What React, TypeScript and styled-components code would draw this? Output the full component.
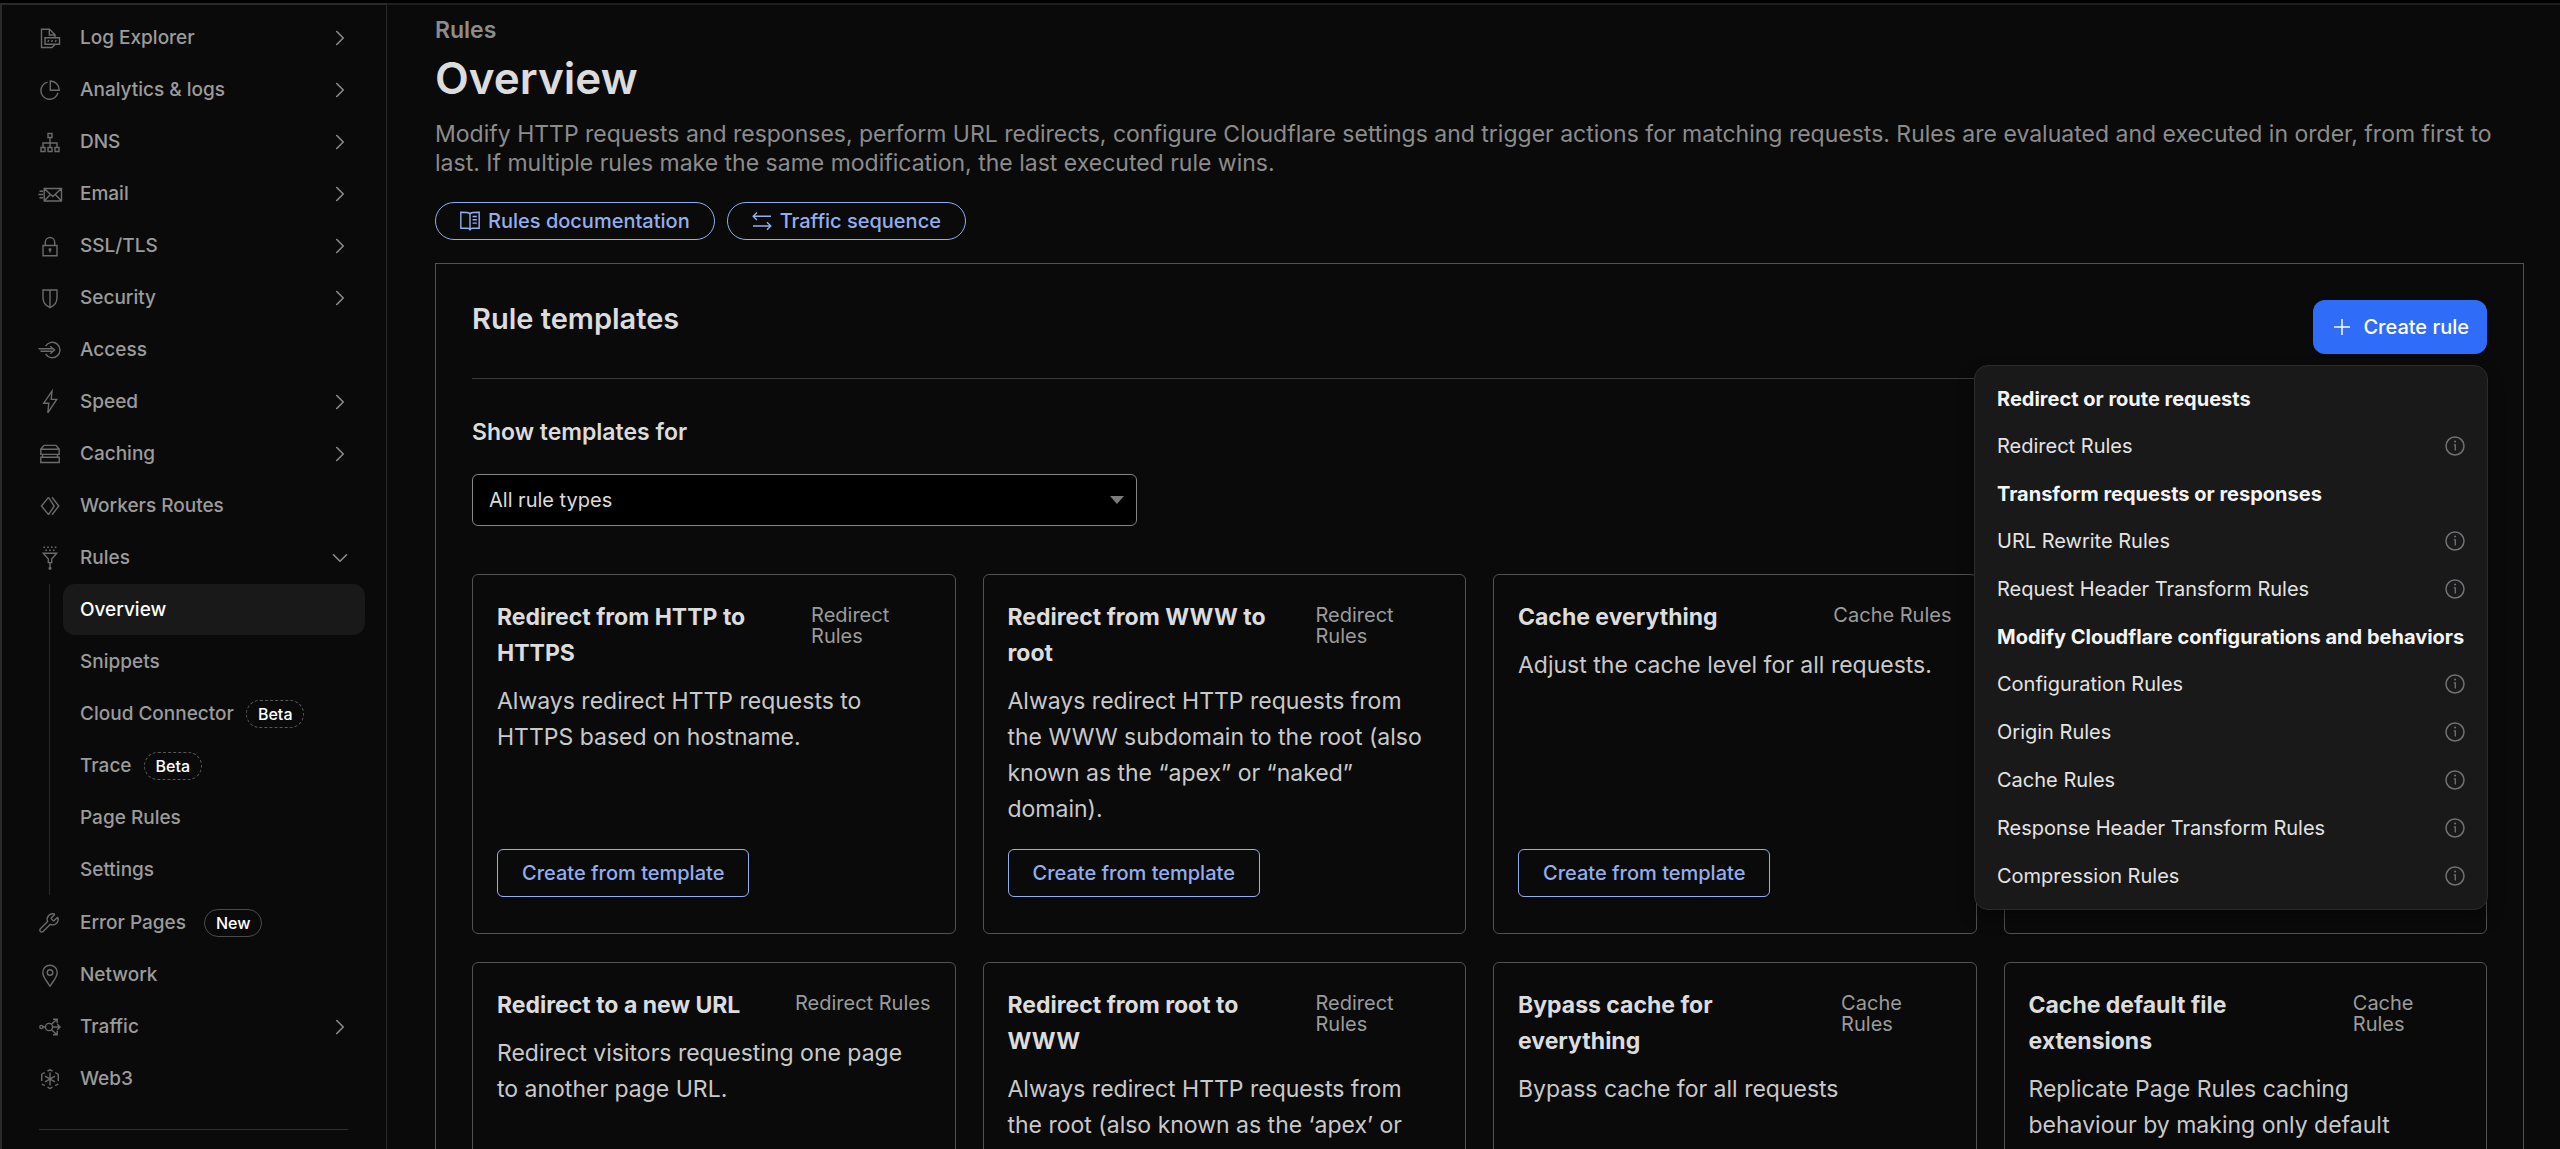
import React, { useState } from "react";
import styled, { createGlobalStyle, css } from "styled-components";
import { ChevronDown, ChevronRight, Wrench } from "lucide-react";

const color = {
  page: "#0a0a0a",
  line: "#2a2a2a",
  outline: "#525252",
  muted: "#9b9b9b",
  soft: "#8c8c8c",
  body: "#c9c9c9",
  heading: "#dcdcdc",
  link: "#93aeee",
  primary: "#2f6cf8",
  menu: "#191919",
};

const GlobalStyle = createGlobalStyle`
  *, *::before, *::after { box-sizing: border-box; }
  body {
    margin: 0;
    background: #000;
    color: ${color.body};
    font-family: Inter, "Liberation Sans", sans-serif;
  }
  h1, h2, h3, p, ul { margin: 0; padding: 0; }
  ul { list-style: none; }
  button, select { font-family: inherit; }
  a { text-decoration: none; color: inherit; }
`;

const Shell = styled.div`
  display: flex;
  height: 100vh;
  overflow: hidden;
  border-top: 3px solid #000;
`;

/* Sidebar */

const Sidebar = styled.nav`
  flex: 0 0 387px;
  border: 2px solid ${color.line};
  border-bottom: 0;
  border-right-width: 1px;
  background: ${color.page};
  padding: 7px 21px 0 0;
`;

const NavList = styled.ul`
  display: flex;
  flex-direction: column;
  gap: 1px;
`;

const SubList = styled(NavList)`
  margin: 1px 0 1px 47px;
  padding-left: 13px;
  border-left: 1px solid ${color.line};
`;

const NavLink = styled.a<{ $nested?: boolean; $active?: boolean }>`
  display: flex;
  align-items: center;
  height: 51px;
  padding: 0 12px 0 36px;
  border-radius: 12px;
  color: ${color.muted};
  font-size: 19px;
  font-weight: 500;
  ${(p) => p.$nested && css`padding-left: 17px;`}
  ${(p) => p.$active && css`background: ${color.menu}; color: #fff;`}
`;

const NavIcon = styled.span`
  display: flex;
  width: 24px;
  margin-right: 18px;
  color: #6b6b6b;
  svg { overflow: visible; }
`;

const NavArrow = styled.span`
  display: flex;
  margin-left: auto;
  color: #8a8a8a;
`;

const Badge = styled.span<{ $dashed?: boolean }>`
  display: inline-flex;
  align-items: center;
  height: 28px;
  margin-left: ${(p) => (p.$dashed ? 12 : 18)}px;
  padding: 0 11px;
  border: ${(p) => (p.$dashed ? "1px dashed #585858" : "1px solid #4c4c4c")};
  border-radius: 14px;
  color: #fff;
  font-size: 16px;
`;

const NavDivider = styled.hr`
  margin: 25px 17px 0 37px;
  border: 0;
  border-top: 1px solid #303030;
`;

/* Main column */

const Main = styled.main`
  flex: 1;
  min-width: 0;
  padding: 11px 36px 0 48px;
  border-top: 2px solid #1e1e1e;
  background: ${color.page};
`;

const Crumb = styled.p`
  color: ${color.soft};
  font-size: 23px;
  font-weight: 600;
  line-height: 28px;
`;

const PageTitle = styled.h1`
  margin-top: 7px;
  color: ${color.heading};
  font-size: 44px;
  font-weight: 600;
  line-height: 54px;
`;

const Intro = styled.p`
  margin-top: 15px;
  color: ${color.soft};
  font-size: 23px;
  line-height: 29px;
`;

const LinkRow = styled.div`
  display: flex;
  gap: 12px;
  margin-top: 24px;
`;

const PillLink = styled.a`
  display: flex;
  align-items: center;
  gap: 8px;
  height: 38px;
  padding: 0 24px;
  border: 1px solid ${color.link};
  border-radius: 19px;
  color: ${color.link};
  font-size: 20px;
  font-weight: 500;
`;

const Panel = styled.section`
  margin-top: 23px;
  padding: 36px;
  border: 1px solid ${color.outline};
`;

const PanelHeader = styled.header`
  display: flex;
  justify-content: space-between;
  align-items: flex-start;
  padding-bottom: 24px;
  border-bottom: 1px solid #3a3a3a;
`;

const PanelTitle = styled.h2`
  color: ${color.heading};
  font-size: 29px;
  font-weight: 600;
  line-height: 38px;
`;

const CreateWrap = styled.div`
  position: relative;
`;

const CreateButton = styled.button`
  display: flex;
  align-items: center;
  gap: 12px;
  height: 54px;
  padding: 0 18px 0 20px;
  border: 0;
  border-radius: 12px;
  background: ${color.primary};
  color: #fff;
  font-size: 20px;
  font-weight: 500;
`;

const Menu = styled.ul`
  position: absolute;
  z-index: 2;
  top: calc(100% + 11px);
  right: -1px;
  min-width: 514px;
  padding: 9px 0;
  border: 1px solid #2c2c2c;
  border-radius: 14px;
  background: ${color.menu};
  box-shadow: 0 8px 16px rgba(0, 0, 0, 0.4);
  white-space: nowrap;
`;

const MenuHeading = styled.li`
  display: flex;
  align-items: center;
  height: 47px;
  padding: 0 22px;
  color: #f4f4f4;
  font-size: 20px;
  font-weight: 700;
`;

const MenuItem = styled.button`
  display: flex;
  align-items: center;
  justify-content: space-between;
  width: 100%;
  height: 48px;
  padding: 0 22px;
  border: 0;
  background: none;
  color: #e4e4e4;
  font-size: 20px;
  text-align: left;
  svg { color: #717176; }
`;

const Filter = styled.div`
  display: flex;
  flex-direction: column;
  gap: 24px;
  margin: 35px 0 48px;
`;

const FilterLabel = styled.label`
  color: ${color.heading};
  font-size: 23px;
  font-weight: 600;
  line-height: 36px;
`;

const SelectWrap = styled.div`
  display: flex;
  position: relative;
  width: 33%;
  svg {
    position: absolute;
    top: 22px;
    right: 13px;
    pointer-events: none;
  }
`;

const Select = styled.select`
  appearance: none;
  width: 100%;
  height: 52px;
  padding: 0 40px 0 16px;
  border: 1px solid #858585;
  border-radius: 6px;
  background: #000;
  color: ${color.heading};
  font-size: 20px;
`;

const CardGrid = styled.div`
  display: grid;
  grid-template-columns: repeat(4, 1fr);
  gap: 28px 27px;
`;

const Card = styled.article`
  display: flex;
  flex-direction: column;
  align-items: flex-start;
  min-height: 360px;
  padding: 24px 24px 36px;
  border: 1px solid ${color.outline};
  border-radius: 6px;
`;

const CardHead = styled.div`
  display: flex;
  justify-content: space-between;
  align-items: flex-start;
  gap: 22px;
  width: 100%;
`;

const CardTitle = styled.h3`
  color: ${color.heading};
  font-size: 23px;
  font-weight: 700;
  line-height: 36px;
`;

const CardTag = styled.span`
  padding-top: 6px;
  color: ${color.muted};
  font-size: 20px;
  line-height: 21px;
`;

const CardText = styled.p`
  margin: 12px 0 22px;
  padding-right: 8px;
  font-size: 23px;
  line-height: 36px;
`;

const TemplateButton = styled.button`
  height: 48px;
  margin-top: auto;
  padding: 0 24px;
  border: 1px solid ${color.link};
  border-radius: 6px;
  background: none;
  color: ${color.link};
  font-size: 20px;
  font-weight: 500;
`;

/* Icons */

const Glyph = ({ children }: { children: React.ReactNode }) => (
  <svg width="24" height="24" viewBox="0 0 24 24" fill="none" stroke="currentColor" strokeWidth="1.4" aria-hidden="true">
    {children}
  </svg>
);

const icons: Record<string, React.ReactNode> = {
  log: (
    <Glyph>
      <path d="M17 11.7V8.7L11.5 3.2H3.5V21.5H14L17 18.5M11.3 3.2V9H17" />
      <path d="M7 11.7H21.5V18.3H7Z" />
      <path d="M9.8 16l1-2M13.5 16l1-2M17.2 16l1-2" />
    </Glyph>
  ),
  analytics: (
    <Glyph>
      <path d="M9.6 4.1A8.7 8.7 0 1 0 20 14.8" />
      <path d="M12.3 3V12.3H21.3A9 9 0 0 0 12.3 3Z" />
    </Glyph>
  ),
  dns: (
    <Glyph>
      <path d="M10 3.5h4v4h-4zM3 17.5h4v4H3zM10 17.5h4v4h-4zM17 17.5h4v4h-4zM12 7.5v10M5 17.5V13h14v4.5" />
    </Glyph>
  ),
  email: (
    <Glyph>
      <path d="M6.2 6.5H23.5V19H6.2ZM6.2 6.5L14.8 14.5L23.5 6.5M6.2 19L12.3 12.4M23.5 19L17.3 12.4" />
      <path d="M1.5 9.3H5M.3 12.5H5M1.5 15.7H5" />
    </Glyph>
  ),
  lock: (
    <Glyph>
      <path d="M5 11.5H19V21.8H5ZM7.3 11.5V8.2a4.7 4.7 0 0 1 9.4 0V11.5" />
      <circle cx="12" cy="15.6" r=".8" fill="currentColor" />
      <path d="M12 16v2.5" />
    </Glyph>
  ),
  shield: (
    <Glyph>
      <path d="M5 4H19V11.5C19 16.5 16 20 12 21.7C8 20 5 16.5 5 11.5ZM12 4V21.5" />
    </Glyph>
  ),
  access: (
    <Glyph>
      <path d="M7.6 8.2A7.7 7.7 0 1 1 7.6 15.8" />
      <path d="M.5 10.7H15.5M2.5 13.2H15.5M12.2 8.3L16.6 12L12.2 15.7" />
    </Glyph>
  ),
  bolt: (
    <Glyph>
      <path d="M14 1.2L5.7 13.2H10.8L9.8 22.8L18.7 9.4H13.2Z" />
    </Glyph>
  ),
  cache: (
    <Glyph>
      <path d="M2.8 7.3L6 3.4H18L21.2 7.3M2.8 7.3H21.2V12.4H2.8ZM2.8 15.2H21.2V20.5H2.8ZM4.5 12.4V15.2M19.5 12.4V15.2" />
    </Glyph>
  ),
  workers: (
    <Glyph>
      <path d="M10.5 3.4L3.5 12L10.5 20.6M10.5 3.4L16.2 12L10.5 20.6M14 3.2L20.8 12L14 20.8" />
    </Glyph>
  ),
  funnel: (
    <Glyph>
      <path d="M5.4 1.3H19" strokeDasharray="1.6 2.2" />
      <path d="M7.4 4.3H17" strokeDasharray="1.6 2.2" />
      <path d="M5.3 7.2H18.7L13.7 13V16.6H10.3V13ZM12 16.6V21.5" />
      <circle cx="12" cy="22.3" r=".9" fill="currentColor" />
    </Glyph>
  ),
  wrench: <Wrench size={22} strokeWidth={1.5} aria-hidden="true" />,
  pin: (
    <Glyph>
      <path d="M12 23.2C9.2 18.8 4.8 14 4.8 9.4a7.2 7.2 0 0 1 14.4 0C19.2 14 14.8 18.8 12 23.2Z" />
      <circle cx="12" cy="9.5" r="2.8" />
    </Glyph>
  ),
  traffic: (
    <Glyph>
      <circle cx="3.4" cy="12" r="1.6" />
      <circle cx="11" cy="12" r="3.6" />
      <path d="M5 12H7.4M14.6 12H22M19.3 9.3L22 12L19.3 14.7M13.4 9.3L19 4.3M15 4.2H19.2V8.2M13.4 14.7L19 19.7M15 19.8H19.2V15.8" />
    </Glyph>
  ),
  web3: (
    <Glyph>
      <path d="M9.5 4L12 2.8L14.5 4M17.2 5.5L20.3 7.3V14M20.3 17L17.2 18.7M14.5 20.2L12 21.5L9.5 20.2M6.8 18.7L3.7 17M3.7 14V7.3L6.8 5.5" />
      <path d="M12 5.5V18.5M7 9.2L17 14.8M17 9.2L7 14.8" />
    </Glyph>
  ),
};

const BookIcon = () => (
  <svg width="20" height="20" viewBox="0 0 20 20" fill="none" stroke="currentColor" strokeWidth="1.4" aria-hidden="true">
    <path d="M10 2.6C8.6 1.5 6.5 1.3 .8 1.3V17.2H7.5C9 17.2 9.6 17.8 10 18.6C10.4 17.8 11 17.2 12.5 17.2H19.2V1.3C13.5 1.3 11.4 1.5 10 2.6ZM10 2.6V18.6" />
    <path d="M12.6 5.5H16.8M12.6 8.8H16.8M12.6 12.1H16.8" />
  </svg>
);

const SwapIcon = () => (
  <svg width="20" height="20" viewBox="0 0 20 20" fill="none" stroke="currentColor" strokeWidth="1.4" aria-hidden="true">
    <path d="M19 5.2H1.4M5 1.4L1.2 5.2L5 9M1 15H18.6M15 11.2L18.8 15L15 18.8" />
  </svg>
);

const PlusIcon = () => (
  <svg width="18" height="18" viewBox="0 0 18 18" fill="none" stroke="currentColor" strokeWidth="1.5" aria-hidden="true">
    <path d="M9 1V17M1 9H17" />
  </svg>
);

const InfoIcon = () => (
  <svg width="20" height="20" viewBox="0 0 20 20" fill="none" stroke="currentColor" strokeWidth="1.5" aria-hidden="true">
    <circle cx="10" cy="10" r="9" />
    <path d="M8.8 8.8H10.3V14.6" strokeWidth="1.3" />
    <circle cx="10.1" cy="5.6" r="1" fill="currentColor" stroke="none" />
  </svg>
);

/* Data */

type NavEntry = { label: string; icon: string; more?: boolean; badge?: string };

const navTop: NavEntry[] = [
  { label: "Log Explorer", icon: "log", more: true },
  { label: "Analytics & logs", icon: "analytics", more: true },
  { label: "DNS", icon: "dns", more: true },
  { label: "Email", icon: "email", more: true },
  { label: "SSL/TLS", icon: "lock", more: true },
  { label: "Security", icon: "shield", more: true },
  { label: "Access", icon: "access" },
  { label: "Speed", icon: "bolt", more: true },
  { label: "Caching", icon: "cache", more: true },
  { label: "Workers Routes", icon: "workers" },
];

const navRules = [
  { label: "Overview", active: true },
  { label: "Snippets" },
  { label: "Cloud Connector", badge: "Beta" },
  { label: "Trace", badge: "Beta" },
  { label: "Page Rules" },
  { label: "Settings" },
];

const navBottom: NavEntry[] = [
  { label: "Error Pages", icon: "wrench", badge: "New" },
  { label: "Network", icon: "pin" },
  { label: "Traffic", icon: "traffic", more: true },
  { label: "Web3", icon: "web3" },
];

const menuGroups = [
  { heading: "Redirect or route requests", items: ["Redirect Rules"] },
  { heading: "Transform requests or responses", items: ["URL Rewrite Rules", "Request Header Transform Rules"] },
  {
    heading: "Modify Cloudflare configurations and behaviors",
    items: ["Configuration Rules", "Origin Rules", "Cache Rules", "Response Header Transform Rules", "Compression Rules"],
  },
];

const templates = [
  { title: "Redirect from HTTP to HTTPS", tag: "Redirect Rules", text: "Always redirect HTTP requests to HTTPS based on hostname." },
  {
    title: "Redirect from WWW to root",
    tag: "Redirect Rules",
    text: "Always redirect HTTP requests from the WWW subdomain to the root (also known as the “apex” or “naked” domain).",
  },
  { title: "Cache everything", tag: "Cache Rules", text: "Adjust the cache level for all requests." },
  null,
  { title: "Redirect to a new URL", tag: "Redirect Rules", text: "Redirect visitors requesting one page to another page URL." },
  {
    title: "Redirect from root to WWW",
    tag: "Redirect Rules",
    text: "Always redirect HTTP requests from the root (also known as the ‘apex’ or ‘naked’ domain) to the WWW subdomain.",
  },
  { title: "Bypass cache for everything", tag: "Cache Rules", text: "Bypass cache for all requests" },
  {
    title: "Cache default file extensions",
    tag: "Cache Rules",
    text: "Replicate Page Rules caching behaviour by making only default extensions eligible for cache.",
  },
];

const NavRow = ({ label, icon, more, badge }: NavEntry) => (
  <li>
    <NavLink href="#">
      <NavIcon>{icons[icon]}</NavIcon>
      {label}
      {badge && <Badge>{badge}</Badge>}
      {more && (
        <NavArrow>
          <ChevronRight size={26} strokeWidth={1.5} />
        </NavArrow>
      )}
    </NavLink>
  </li>
);

export default function App() {
  const [open, setOpen] = useState(true);

  return (
    <Shell>
      <GlobalStyle />
      <Sidebar aria-label="Zone">
        <NavList>
          {navTop.map((entry) => (
            <NavRow key={entry.label} {...entry} />
          ))}
          <li>
            <NavLink href="#">
              <NavIcon>{icons.funnel}</NavIcon>
              Rules
              <NavArrow>
                <ChevronDown size={26} strokeWidth={1.5} />
              </NavArrow>
            </NavLink>
            <SubList>
              {navRules.map((entry) => (
                <li key={entry.label}>
                  <NavLink href="#" $nested $active={entry.active}>
                    {entry.label}
                    {entry.badge && <Badge $dashed>{entry.badge}</Badge>}
                  </NavLink>
                </li>
              ))}
            </SubList>
          </li>
          {navBottom.map((entry) => (
            <NavRow key={entry.label} {...entry} />
          ))}
        </NavList>
        <NavDivider />
      </Sidebar>

      <Main>
        <Crumb>Rules</Crumb>
        <PageTitle>Overview</PageTitle>
        <Intro>
          Modify HTTP requests and responses, perform URL redirects, configure Cloudflare settings and trigger actions for
          matching requests. Rules are evaluated and executed in order, from first to last. If multiple rules make the same
          modification, the last executed rule wins.
        </Intro>
        <LinkRow>
          <PillLink href="#">
            <BookIcon />
            Rules documentation
          </PillLink>
          <PillLink href="#">
            <SwapIcon />
            Traffic sequence
          </PillLink>
        </LinkRow>

        <Panel>
          <PanelHeader>
            <PanelTitle>Rule templates</PanelTitle>
            <CreateWrap>
              <CreateButton type="button" aria-expanded={open} onClick={() => setOpen(!open)}>
                <PlusIcon />
                Create rule
              </CreateButton>
              {open && (
                <Menu>
                  {menuGroups.map((group) => (
                    <React.Fragment key={group.heading}>
                      <MenuHeading>{group.heading}</MenuHeading>
                      {group.items.map((item) => (
                        <li key={item}>
                          <MenuItem type="button">
                            {item}
                            <InfoIcon />
                          </MenuItem>
                        </li>
                      ))}
                    </React.Fragment>
                  ))}
                </Menu>
              )}
            </CreateWrap>
          </PanelHeader>

          <Filter>
            <FilterLabel htmlFor="rule-type">Show templates for</FilterLabel>
            <SelectWrap>
              <Select id="rule-type">
                <option>All rule types</option>
              </Select>
              <svg width="14" height="8" viewBox="0 0 14 8" aria-hidden="true">
                <path d="M0 0H14L7 8Z" fill="#7b7b7e" />
              </svg>
            </SelectWrap>
          </Filter>

          <CardGrid>
            {templates.map((item, index) =>
              item ? (
                <Card key={index}>
                  <CardHead>
                    <CardTitle>{item.title}</CardTitle>
                    <CardTag>{item.tag}</CardTag>
                  </CardHead>
                  <CardText>{item.text}</CardText>
                  <TemplateButton type="button">Create from template</TemplateButton>
                </Card>
              ) : (
                <Card key={index} />
              )
            )}
          </CardGrid>
        </Panel>
      </Main>
    </Shell>
  );
}
